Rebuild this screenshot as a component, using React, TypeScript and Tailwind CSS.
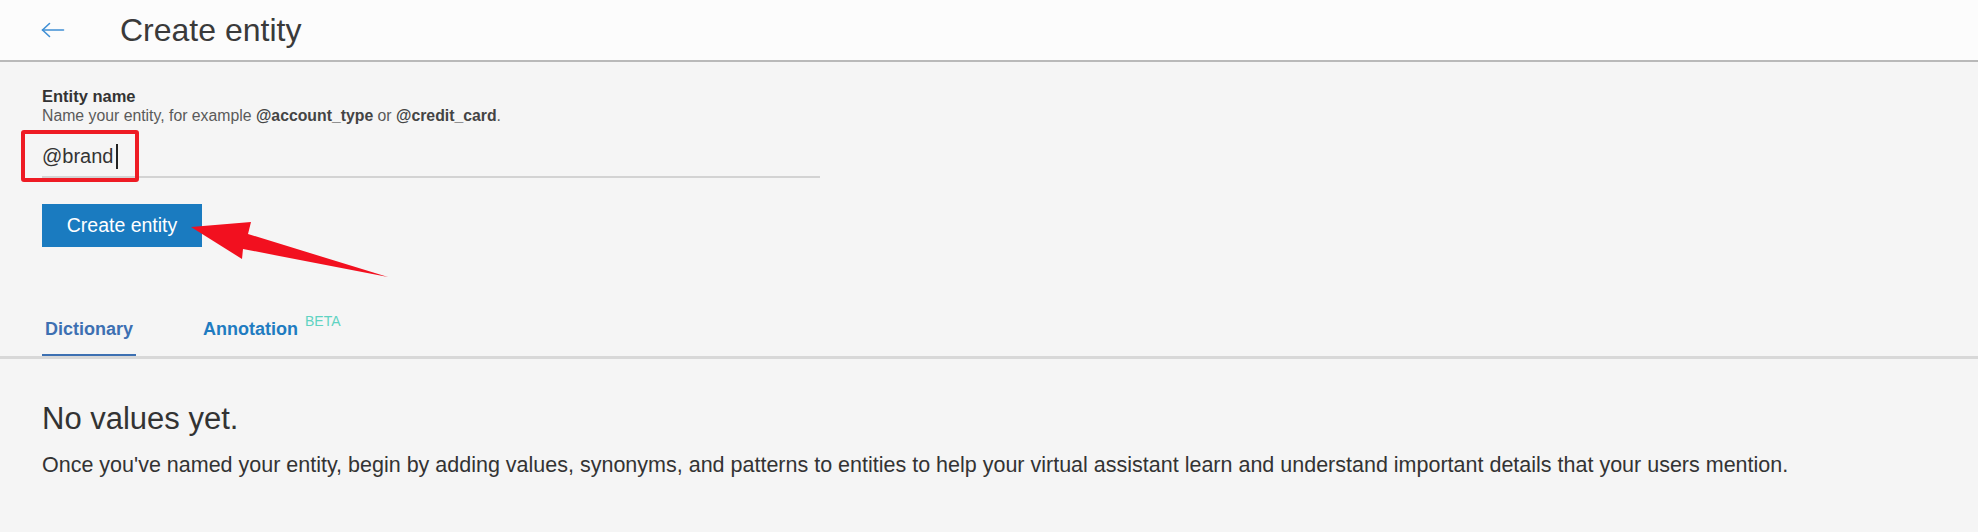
function BackArrow() {
  return (
    <svg width="24" height="16" viewBox="0 0 24 16" fill="none" stroke="#3f8fd4" strokeWidth="1.6" strokeLinecap="round">
      <path d="M1.5 8 H22.5" />
      <path d="M8.5 1.5 L1.5 8 L8.5 14.5" strokeLinejoin="round" />
    </svg>
  );
}

function Tabs() {
  return (
    <div className="flex items-end gap-[64px] border-b-[3px] border-[#d8d8d8] px-[42px] pt-[70px]">
      <div className="border-b-2 border-[#3d70b2] px-[3px] pb-[13px] text-[18px] leading-[24px] font-bold text-[#3d70b2]">
        Dictionary
      </div>
      <div className="px-[3px] pb-[15px] text-[18px] leading-[24px] font-bold text-[#1f7cc1]">
        Annotation
        <span className="ml-[7px] align-[9px] text-[14px] leading-[0] font-normal text-[#5fd3c2]">BETA</span>
      </div>
    </div>
  );
}

export default function App() {
  return (
    <main className="relative min-h-screen w-screen bg-[#f5f5f5] font-['Liberation_Sans',Arial,sans-serif] text-[#333]">
      <header className="flex h-[62px] items-center border-b-2 border-[#b9b9b9] bg-[#fcfcfc] pl-[41px]">
        <BackArrow />
        <h1 className="ml-[55px] text-[32px] leading-[40px] font-normal text-[#3a3a3a]">Create entity</h1>
      </header>

      <section className="flex flex-col items-start px-[42px] pt-[24px]">
        <div className="text-[16.5px] leading-[20px] font-bold text-[#333]">Entity name</div>
        <p className="text-[15.8px] leading-[20px] text-[#5a5a5a]">
          Name your entity, for example <b className="text-[#444]">@account_type</b> or{" "}
          <b className="text-[#444]">@credit_card</b>.
        </p>

        <div className="relative w-[778px] border-b-2 border-[#d3d3d3] pt-[16px] pb-[6px]">
          <div className="flex items-center text-[20px] leading-[28px] text-[#333]">
            @brand
            <span className="ml-[3px] inline-block h-[25px] w-[2px] bg-[#222]" />
          </div>
          <div className="pointer-events-none absolute top-[4px] left-[-21px] h-[52px] w-[118px] rounded-[3px] border-4 border-[#ee1b24]" />
        </div>

        <button className="mt-[26px] block h-[43px] w-[160px] bg-[#1a7bc0] text-[19.5px] text-white">Create entity</button>
      </section>

      <Tabs />

      <section className="px-[42px] pt-[42px]">
        <h2 className="text-[31px] leading-[36px] font-normal text-[#333]">No values yet.</h2>
        <p className="mt-[14px] text-[21.5px] leading-[28px] text-[#333]">
          Once you've named your entity, begin by adding values, synonyms, and patterns to entities to help your virtual
          assistant learn and understand important details that your users mention.
        </p>
      </section>

      <svg className="pointer-events-none absolute top-0 left-0" width="400" height="300" viewBox="0 0 400 300">
        <polygon points="191,227 251,222 248,234 388,277 243,249 242,259" fill="#f2101f" />
      </svg>
    </main>
  );
}
